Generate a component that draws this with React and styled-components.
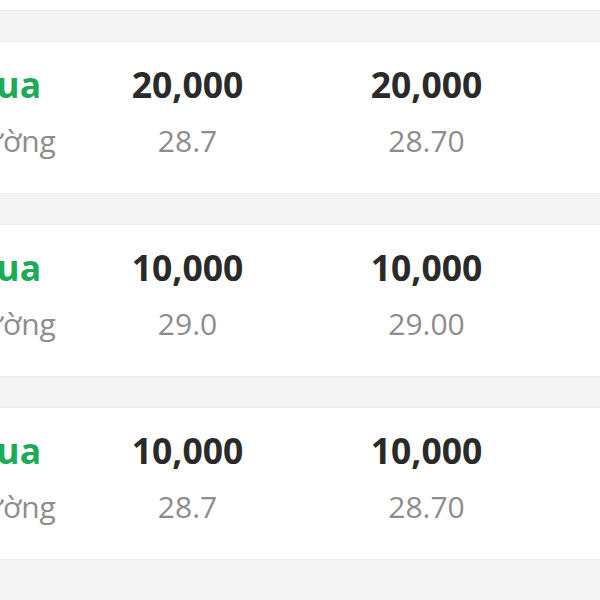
import React from "react";
import styled, { createGlobalStyle } from "styled-components";

const ROWS = [
  { id: 0, qty: "20,000", rate: "28.7", price: "20,000", rate2: "28.70" },
  { id: 1, qty: "20,000", rate: "28.7", price: "20,000", rate2: "28.70" },
  { id: 2, qty: "10,000", rate: "29.0", price: "10,000", rate2: "29.00" },
  { id: 3, qty: "10,000", rate: "28.7", price: "10,000", rate2: "28.70" },
];

export default function App() {
  return (
    <>
      <GlobalStyle />
      <Page>
        <List>
          {ROWS.map((row) => (
            <Card key={row.id}>
              <Column>
                <Title $green>Mua</Title>
                <Sub>Thường</Sub>
              </Column>
              <Column>
                <Title>{row.qty}</Title>
                <Sub>{row.rate}</Sub>
              </Column>
              <Column>
                <Title>{row.price}</Title>
                <Sub>{row.rate2}</Sub>
              </Column>
            </Card>
          ))}
        </List>
      </Page>
    </>
  );
}

const GlobalStyle = createGlobalStyle`
  html, body {
    margin: 0;
    padding: 0;
    background: #f4f4f4;
    font-family: "Open Sans", "Liberation Sans", sans-serif;
  }
`;

const Page = styled.div`
  width: 600px;
  height: 600px;
  overflow: hidden;
  background: #f4f4f4;
`;

// list is scrolled: the first card only shows its last 10px
const List = styled.div`
  display: flex;
  flex-direction: column;
  gap: 32px;
  margin-top: -141px;
`;

const Card = styled.div`
  display: grid;
  grid-template-columns: 160px 211px 267px;
  margin-left: -78px;
  width: 678px;
  height: 151px;
  box-sizing: border-box;
  padding: 19px 0 33px;
  background: #fff;
  box-shadow: 0 0 0 1px #efefef;
`;

const Column = styled.div`
  display: flex;
  flex-direction: column;
  align-items: center;
  gap: 15px;
  white-space: nowrap;
`;

const Title = styled.div`
  height: 46px;
  line-height: 46px;
  font-size: 35.5px;
  font-weight: 700;
  color: ${(p) => (p.$green ? "#1eab58" : "#2a2a2a")};
`;

const Sub = styled.div`
  height: 38px;
  line-height: 38px;
  font-size: 30px;
  font-weight: 400;
  color: #8d8d8d;
`;
